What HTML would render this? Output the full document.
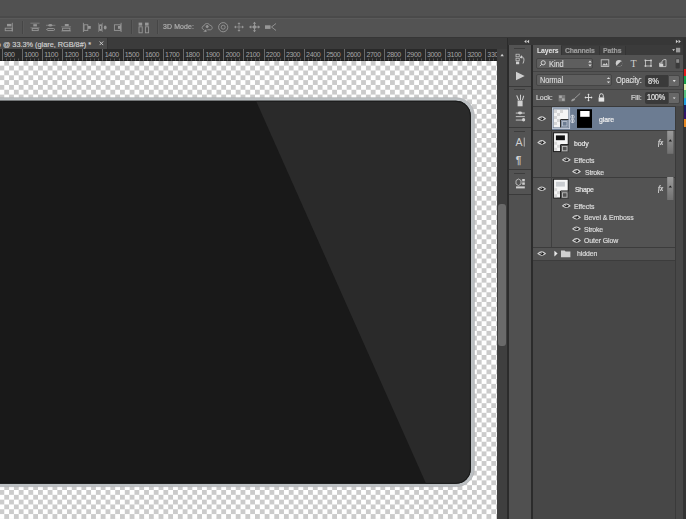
<!DOCTYPE html>
<html><head><meta charset="utf-8"><style>
*{margin:0;padding:0;box-sizing:border-box}
html,body{width:686px;height:519px;overflow:hidden;background:#535353;font-family:"Liberation Sans",sans-serif}
.a{position:absolute}
.t{position:absolute;white-space:nowrap;line-height:1;font-family:"Liberation Sans",sans-serif}
svg{position:absolute;overflow:visible}
</style></head><body>
<div class="a" style="left:0px;top:0px;width:686px;height:17px;background:#515151;"></div>
<div class="a" style="left:0px;top:16px;width:686px;height:2px;background:#4a4a4a;"></div>
<div class="a" style="left:0px;top:18px;width:686px;height:1px;background:#5a5a5a;"></div>
<div class="a" style="left:0px;top:19px;width:686px;height:18px;background:#535353;"></div>
<div class="a" style="left:0px;top:37px;width:686px;height:1px;background:#363636;"></div>
<div class="a" style="left:22px;top:21px;width:1px;height:13px;background:#464646;"></div>
<div class="a" style="left:23px;top:21px;width:1px;height:13px;background:#585858;"></div>
<div class="a" style="left:131px;top:20px;width:1px;height:14px;background:#464646;"></div>
<div class="a" style="left:132px;top:20px;width:1px;height:14px;background:#585858;"></div>
<div class="a" style="left:157px;top:20px;width:1px;height:14px;background:#464646;"></div>
<div class="a" style="left:158px;top:20px;width:1px;height:14px;background:#585858;"></div>
<svg style="left:0;top:0;filter:blur(0.2px)" width="300" height="40" viewBox="0 0 300 40">
<g fill="none" stroke="#979797" stroke-width="0.9">
 <!-- icon1 align right -->
 <rect x="7" y="23.9" width="4.4" height="2.4" fill="#979797" stroke="none"/>
 <rect x="5.2" y="28.2" width="7" height="2.5"/>
 <line x1="12.3" y1="22.8" x2="12.3" y2="31.5"/>
 <!-- icon2 align top -->
 <line x1="30.4" y1="23.2" x2="39.6" y2="23.2" stroke-width="0.6"/>
 <rect x="33.3" y="24.2" width="3.6" height="2.2" fill="#979797" stroke="none"/>
 <line x1="30.4" y1="27.8" x2="39.6" y2="27.8" stroke-width="0.6"/>
 <rect x="32.2" y="28.6" width="6" height="2"/>
 <!-- icon3 align vcenter -->
 <ellipse cx="50.3" cy="25.3" rx="2" ry="1.3" fill="#979797" stroke="none"/>
 <line x1="46" y1="25.3" x2="55.4" y2="25.3" stroke-width="0.6"/>
 <path d="M46.5 29.5 L48 28.5 L53.5 28.5 L55 29.5 L53.5 30.5 L48 30.5 Z"/>
 <!-- icon4 align bottom -->
 <rect x="64.8" y="24" width="3.9" height="2.1" fill="#979797" stroke="none"/>
 <line x1="61.2" y1="26.8" x2="71.1" y2="26.8" stroke-width="0.6"/>
 <rect x="62.6" y="28.2" width="7.3" height="2.4"/>
 <line x1="61.2" y1="31" x2="71.1" y2="31" stroke-width="0.6"/>
 <!-- icon5 align left -->
 <line x1="83.4" y1="22.8" x2="83.4" y2="32"/>
 <rect x="84" y="24.8" width="3.8" height="5.6"/>
 <rect x="88" y="26" width="2.8" height="2.8" fill="#979797" stroke="none"/>
 <!-- icon6 align hcenter -->
 <line x1="102.3" y1="22.8" x2="102.3" y2="32" stroke-width="0.6"/>
 <rect x="99.6" y="24.8" width="1.9" height="5.6"/>
 <ellipse cx="105.2" cy="27.4" rx="1.4" ry="2" fill="#979797" stroke="none"/>
 <line x1="98.5" y1="22.8" x2="98.5" y2="32" stroke-width="0.5"/>
 <!-- icon7 align right -->
 <line x1="121.1" y1="22.8" x2="121.1" y2="32"/>
 <rect x="114.4" y="24.8" width="6" height="5.6"/>
 <rect x="118" y="26" width="2.8" height="2.8" fill="#979797" stroke="none"/>
 <!-- icon8 auto-align -->
 <rect x="138.6" y="22.6" width="3.6" height="3" fill="#979797" stroke="none"/>
 <rect x="145" y="22.6" width="3.6" height="3" fill="#979797" stroke="none"/>
 <rect x="139" y="26.8" width="3.2" height="6"/>
 <rect x="145.4" y="26.8" width="3.2" height="6"/>
</g>
</svg>
<div class="t" style="left:162.6px;top:23.4px;font-size:7.70px;color:#b0b0b0;transform:scaleX(0.9);transform-origin:0 0;-webkit-text-stroke:0.2px #b0b0b0;letter-spacing:0.15px">3D Mode:</div>
<svg style="left:0;top:0;filter:blur(0.2px)" width="300" height="40" viewBox="0 0 300 40">
<g fill="none" stroke="#979797" stroke-width="0.9">
 <path d="M204 29.6 C201.6 29.4 201.4 26 204 25.8 C204.4 23.2 208.6 22.6 209.6 25.2 C212.6 25.2 213.2 29.4 210.4 29.8 L207.4 29.8"/>
 <circle cx="207.2" cy="26.6" r="1.1" fill="#979797"/>
 <path d="M203.2 31.6 L206.2 29.2 L206.6 32 Z" fill="#979797" stroke="none"/>
 <circle cx="223.2" cy="27.2" r="4.6"/>
 <circle cx="223.2" cy="27.2" r="2" />
 <path d="M236 27 L242 27 M239 24 L239 30" stroke-width="0.7"/>
 <path d="M234 27 L236 25.5 L236 28.5 Z M244 27 L242 25.5 L242 28.5 Z M239 22.2 L237.5 24 L240.5 24 Z M239 31.8 L237.5 30 L240.5 30 Z" fill="#979797" stroke="none"/>
 <circle cx="254.5" cy="27" r="1.8" fill="#979797" stroke="none"/>
 <path d="M249.5 27 L259.8 27 M254.5 22 L254.5 32" stroke-width="0.9"/>
 <path d="M249.2 27 L251.2 25.3 L251.2 28.7 Z M259.9 27 L257.9 25.3 L257.9 28.7 Z M254.5 21.8 L252.8 23.8 L256.2 23.8 Z M254.5 32.2 L252.8 30.2 L256.2 30.2 Z" fill="#979797" stroke="none"/>
 <rect x="265" y="25.3" width="5.5" height="3.6" fill="#979797" stroke="none"/>
 <path d="M276 23.5 L271.5 27 L276 30.5"/>
</g>
</svg>
<div class="a" style="left:0px;top:38px;width:507px;height:11px;background:#3b3b3b;"></div>
<div class="a" style="left:0px;top:38px;width:107px;height:11px;background:#4a4a4a;"></div>
<div class="a" style="left:107px;top:38px;width:1px;height:11px;background:#343434;"></div>
<div class="t" style="left:-3.2px;top:40.6px;font-size:7.3px;color:#d2d2d2;-webkit-text-stroke:0.15px #d2d2d2">o @ 33.3% (glare, RGB/8#) *</div>
<svg style="left:0;top:0" width="120" height="60" viewBox="0 0 120 60"><path d="M99.6 41.5 L103.2 45.1 M103.2 41.5 L99.6 45.1" stroke="#c8c8c8" stroke-width="1"/></svg>
<div class="a" style="left:0px;top:49px;width:497px;height:12px;background:#292929;"></div>
<div class="a" style="left:0px;top:60px;width:497px;height:1px;background:#1e1e1e;"></div>
<svg style="left:0;top:0" width="497" height="61" viewBox="0 0 497 61"><g stroke="#686868" stroke-width="1"><line x1="2.50" y1="49" x2="2.50" y2="60.5"/><line x1="6.50" y1="58.5" x2="6.50" y2="60.5" stroke="#5a5a5a"/><line x1="10.50" y1="58.5" x2="10.50" y2="60.5" stroke="#5a5a5a"/><line x1="14.50" y1="58.5" x2="14.50" y2="60.5" stroke="#5a5a5a"/><line x1="18.50" y1="58.5" x2="18.50" y2="60.5" stroke="#5a5a5a"/><line x1="22.50" y1="49" x2="22.50" y2="60.5"/><line x1="26.50" y1="58.5" x2="26.50" y2="60.5" stroke="#5a5a5a"/><line x1="30.50" y1="58.5" x2="30.50" y2="60.5" stroke="#5a5a5a"/><line x1="34.50" y1="58.5" x2="34.50" y2="60.5" stroke="#5a5a5a"/><line x1="38.50" y1="58.5" x2="38.50" y2="60.5" stroke="#5a5a5a"/><line x1="42.50" y1="49" x2="42.50" y2="60.5"/><line x1="46.50" y1="58.5" x2="46.50" y2="60.5" stroke="#5a5a5a"/><line x1="50.50" y1="58.5" x2="50.50" y2="60.5" stroke="#5a5a5a"/><line x1="54.50" y1="58.5" x2="54.50" y2="60.5" stroke="#5a5a5a"/><line x1="58.50" y1="58.5" x2="58.50" y2="60.5" stroke="#5a5a5a"/><line x1="62.50" y1="49" x2="62.50" y2="60.5"/><line x1="66.50" y1="58.5" x2="66.50" y2="60.5" stroke="#5a5a5a"/><line x1="70.50" y1="58.5" x2="70.50" y2="60.5" stroke="#5a5a5a"/><line x1="74.50" y1="58.5" x2="74.50" y2="60.5" stroke="#5a5a5a"/><line x1="78.50" y1="58.5" x2="78.50" y2="60.5" stroke="#5a5a5a"/><line x1="82.50" y1="49" x2="82.50" y2="60.5"/><line x1="86.50" y1="58.5" x2="86.50" y2="60.5" stroke="#5a5a5a"/><line x1="90.50" y1="58.5" x2="90.50" y2="60.5" stroke="#5a5a5a"/><line x1="94.50" y1="58.5" x2="94.50" y2="60.5" stroke="#5a5a5a"/><line x1="98.50" y1="58.5" x2="98.50" y2="60.5" stroke="#5a5a5a"/><line x1="102.50" y1="49" x2="102.50" y2="60.5"/><line x1="106.50" y1="58.5" x2="106.50" y2="60.5" stroke="#5a5a5a"/><line x1="110.50" y1="58.5" x2="110.50" y2="60.5" stroke="#5a5a5a"/><line x1="114.50" y1="58.5" x2="114.50" y2="60.5" stroke="#5a5a5a"/><line x1="119.50" y1="58.5" x2="119.50" y2="60.5" stroke="#5a5a5a"/><line x1="123.50" y1="49" x2="123.50" y2="60.5"/><line x1="127.50" y1="58.5" x2="127.50" y2="60.5" stroke="#5a5a5a"/><line x1="131.50" y1="58.5" x2="131.50" y2="60.5" stroke="#5a5a5a"/><line x1="135.50" y1="58.5" x2="135.50" y2="60.5" stroke="#5a5a5a"/><line x1="139.50" y1="58.5" x2="139.50" y2="60.5" stroke="#5a5a5a"/><line x1="143.50" y1="49" x2="143.50" y2="60.5"/><line x1="147.50" y1="58.5" x2="147.50" y2="60.5" stroke="#5a5a5a"/><line x1="151.50" y1="58.5" x2="151.50" y2="60.5" stroke="#5a5a5a"/><line x1="155.50" y1="58.5" x2="155.50" y2="60.5" stroke="#5a5a5a"/><line x1="159.50" y1="58.5" x2="159.50" y2="60.5" stroke="#5a5a5a"/><line x1="163.50" y1="49" x2="163.50" y2="60.5"/><line x1="167.50" y1="58.5" x2="167.50" y2="60.5" stroke="#5a5a5a"/><line x1="171.50" y1="58.5" x2="171.50" y2="60.5" stroke="#5a5a5a"/><line x1="175.50" y1="58.5" x2="175.50" y2="60.5" stroke="#5a5a5a"/><line x1="179.50" y1="58.5" x2="179.50" y2="60.5" stroke="#5a5a5a"/><line x1="183.50" y1="49" x2="183.50" y2="60.5"/><line x1="187.50" y1="58.5" x2="187.50" y2="60.5" stroke="#5a5a5a"/><line x1="191.50" y1="58.5" x2="191.50" y2="60.5" stroke="#5a5a5a"/><line x1="195.50" y1="58.5" x2="195.50" y2="60.5" stroke="#5a5a5a"/><line x1="199.50" y1="58.5" x2="199.50" y2="60.5" stroke="#5a5a5a"/><line x1="203.50" y1="49" x2="203.50" y2="60.5"/><line x1="207.50" y1="58.5" x2="207.50" y2="60.5" stroke="#5a5a5a"/><line x1="211.50" y1="58.5" x2="211.50" y2="60.5" stroke="#5a5a5a"/><line x1="215.50" y1="58.5" x2="215.50" y2="60.5" stroke="#5a5a5a"/><line x1="219.50" y1="58.5" x2="219.50" y2="60.5" stroke="#5a5a5a"/><line x1="223.50" y1="49" x2="223.50" y2="60.5"/><line x1="227.50" y1="58.5" x2="227.50" y2="60.5" stroke="#5a5a5a"/><line x1="231.50" y1="58.5" x2="231.50" y2="60.5" stroke="#5a5a5a"/><line x1="235.50" y1="58.5" x2="235.50" y2="60.5" stroke="#5a5a5a"/><line x1="239.50" y1="58.5" x2="239.50" y2="60.5" stroke="#5a5a5a"/><line x1="243.50" y1="49" x2="243.50" y2="60.5"/><line x1="247.50" y1="58.5" x2="247.50" y2="60.5" stroke="#5a5a5a"/><line x1="251.50" y1="58.5" x2="251.50" y2="60.5" stroke="#5a5a5a"/><line x1="255.50" y1="58.5" x2="255.50" y2="60.5" stroke="#5a5a5a"/><line x1="259.50" y1="58.5" x2="259.50" y2="60.5" stroke="#5a5a5a"/><line x1="264.50" y1="49" x2="264.50" y2="60.5"/><line x1="268.50" y1="58.5" x2="268.50" y2="60.5" stroke="#5a5a5a"/><line x1="272.50" y1="58.5" x2="272.50" y2="60.5" stroke="#5a5a5a"/><line x1="276.50" y1="58.5" x2="276.50" y2="60.5" stroke="#5a5a5a"/><line x1="280.50" y1="58.5" x2="280.50" y2="60.5" stroke="#5a5a5a"/><line x1="284.50" y1="49" x2="284.50" y2="60.5"/><line x1="288.50" y1="58.5" x2="288.50" y2="60.5" stroke="#5a5a5a"/><line x1="292.50" y1="58.5" x2="292.50" y2="60.5" stroke="#5a5a5a"/><line x1="296.50" y1="58.5" x2="296.50" y2="60.5" stroke="#5a5a5a"/><line x1="300.50" y1="58.5" x2="300.50" y2="60.5" stroke="#5a5a5a"/><line x1="304.50" y1="49" x2="304.50" y2="60.5"/><line x1="308.50" y1="58.5" x2="308.50" y2="60.5" stroke="#5a5a5a"/><line x1="312.50" y1="58.5" x2="312.50" y2="60.5" stroke="#5a5a5a"/><line x1="316.50" y1="58.5" x2="316.50" y2="60.5" stroke="#5a5a5a"/><line x1="320.50" y1="58.5" x2="320.50" y2="60.5" stroke="#5a5a5a"/><line x1="324.50" y1="49" x2="324.50" y2="60.5"/><line x1="328.50" y1="58.5" x2="328.50" y2="60.5" stroke="#5a5a5a"/><line x1="332.50" y1="58.5" x2="332.50" y2="60.5" stroke="#5a5a5a"/><line x1="336.50" y1="58.5" x2="336.50" y2="60.5" stroke="#5a5a5a"/><line x1="340.50" y1="58.5" x2="340.50" y2="60.5" stroke="#5a5a5a"/><line x1="344.50" y1="49" x2="344.50" y2="60.5"/><line x1="348.50" y1="58.5" x2="348.50" y2="60.5" stroke="#5a5a5a"/><line x1="352.50" y1="58.5" x2="352.50" y2="60.5" stroke="#5a5a5a"/><line x1="356.50" y1="58.5" x2="356.50" y2="60.5" stroke="#5a5a5a"/><line x1="360.50" y1="58.5" x2="360.50" y2="60.5" stroke="#5a5a5a"/><line x1="364.50" y1="49" x2="364.50" y2="60.5"/><line x1="368.50" y1="58.5" x2="368.50" y2="60.5" stroke="#5a5a5a"/><line x1="372.50" y1="58.5" x2="372.50" y2="60.5" stroke="#5a5a5a"/><line x1="376.50" y1="58.5" x2="376.50" y2="60.5" stroke="#5a5a5a"/><line x1="380.50" y1="58.5" x2="380.50" y2="60.5" stroke="#5a5a5a"/><line x1="384.50" y1="49" x2="384.50" y2="60.5"/><line x1="388.50" y1="58.5" x2="388.50" y2="60.5" stroke="#5a5a5a"/><line x1="392.50" y1="58.5" x2="392.50" y2="60.5" stroke="#5a5a5a"/><line x1="396.50" y1="58.5" x2="396.50" y2="60.5" stroke="#5a5a5a"/><line x1="400.50" y1="58.5" x2="400.50" y2="60.5" stroke="#5a5a5a"/><line x1="405.50" y1="49" x2="405.50" y2="60.5"/><line x1="409.50" y1="58.5" x2="409.50" y2="60.5" stroke="#5a5a5a"/><line x1="413.50" y1="58.5" x2="413.50" y2="60.5" stroke="#5a5a5a"/><line x1="417.50" y1="58.5" x2="417.50" y2="60.5" stroke="#5a5a5a"/><line x1="421.50" y1="58.5" x2="421.50" y2="60.5" stroke="#5a5a5a"/><line x1="425.50" y1="49" x2="425.50" y2="60.5"/><line x1="429.50" y1="58.5" x2="429.50" y2="60.5" stroke="#5a5a5a"/><line x1="433.50" y1="58.5" x2="433.50" y2="60.5" stroke="#5a5a5a"/><line x1="437.50" y1="58.5" x2="437.50" y2="60.5" stroke="#5a5a5a"/><line x1="441.50" y1="58.5" x2="441.50" y2="60.5" stroke="#5a5a5a"/><line x1="445.50" y1="49" x2="445.50" y2="60.5"/><line x1="449.50" y1="58.5" x2="449.50" y2="60.5" stroke="#5a5a5a"/><line x1="453.50" y1="58.5" x2="453.50" y2="60.5" stroke="#5a5a5a"/><line x1="457.50" y1="58.5" x2="457.50" y2="60.5" stroke="#5a5a5a"/><line x1="461.50" y1="58.5" x2="461.50" y2="60.5" stroke="#5a5a5a"/><line x1="465.50" y1="49" x2="465.50" y2="60.5"/><line x1="469.50" y1="58.5" x2="469.50" y2="60.5" stroke="#5a5a5a"/><line x1="473.50" y1="58.5" x2="473.50" y2="60.5" stroke="#5a5a5a"/><line x1="477.50" y1="58.5" x2="477.50" y2="60.5" stroke="#5a5a5a"/><line x1="481.50" y1="58.5" x2="481.50" y2="60.5" stroke="#5a5a5a"/><line x1="485.50" y1="49" x2="485.50" y2="60.5"/><line x1="489.50" y1="58.5" x2="489.50" y2="60.5" stroke="#5a5a5a"/><line x1="493.50" y1="58.5" x2="493.50" y2="60.5" stroke="#5a5a5a"/></g></svg>
<div class="a" style="left:0;top:49px;width:497px;height:11px;overflow:hidden">
<div class="t" style="left:4.00px;top:2px;font-size:7px;color:#a6a6a6;letter-spacing:-0.35px">900</div>
<div class="t" style="left:24.14px;top:2px;font-size:7px;color:#a6a6a6;letter-spacing:-0.35px">1000</div>
<div class="t" style="left:44.28px;top:2px;font-size:7px;color:#a6a6a6;letter-spacing:-0.35px">1100</div>
<div class="t" style="left:64.42px;top:2px;font-size:7px;color:#a6a6a6;letter-spacing:-0.35px">1200</div>
<div class="t" style="left:84.56px;top:2px;font-size:7px;color:#a6a6a6;letter-spacing:-0.35px">1300</div>
<div class="t" style="left:104.70px;top:2px;font-size:7px;color:#a6a6a6;letter-spacing:-0.35px">1400</div>
<div class="t" style="left:124.84px;top:2px;font-size:7px;color:#a6a6a6;letter-spacing:-0.35px">1500</div>
<div class="t" style="left:144.98px;top:2px;font-size:7px;color:#a6a6a6;letter-spacing:-0.35px">1600</div>
<div class="t" style="left:165.12px;top:2px;font-size:7px;color:#a6a6a6;letter-spacing:-0.35px">1700</div>
<div class="t" style="left:185.26px;top:2px;font-size:7px;color:#a6a6a6;letter-spacing:-0.35px">1800</div>
<div class="t" style="left:205.40px;top:2px;font-size:7px;color:#a6a6a6;letter-spacing:-0.35px">1900</div>
<div class="t" style="left:225.54px;top:2px;font-size:7px;color:#a6a6a6;letter-spacing:-0.35px">2000</div>
<div class="t" style="left:245.68px;top:2px;font-size:7px;color:#a6a6a6;letter-spacing:-0.35px">2100</div>
<div class="t" style="left:265.82px;top:2px;font-size:7px;color:#a6a6a6;letter-spacing:-0.35px">2200</div>
<div class="t" style="left:285.96px;top:2px;font-size:7px;color:#a6a6a6;letter-spacing:-0.35px">2300</div>
<div class="t" style="left:306.10px;top:2px;font-size:7px;color:#a6a6a6;letter-spacing:-0.35px">2400</div>
<div class="t" style="left:326.24px;top:2px;font-size:7px;color:#a6a6a6;letter-spacing:-0.35px">2500</div>
<div class="t" style="left:346.38px;top:2px;font-size:7px;color:#a6a6a6;letter-spacing:-0.35px">2600</div>
<div class="t" style="left:366.52px;top:2px;font-size:7px;color:#a6a6a6;letter-spacing:-0.35px">2700</div>
<div class="t" style="left:386.66px;top:2px;font-size:7px;color:#a6a6a6;letter-spacing:-0.35px">2800</div>
<div class="t" style="left:406.80px;top:2px;font-size:7px;color:#a6a6a6;letter-spacing:-0.35px">2900</div>
<div class="t" style="left:426.94px;top:2px;font-size:7px;color:#a6a6a6;letter-spacing:-0.35px">3000</div>
<div class="t" style="left:447.08px;top:2px;font-size:7px;color:#a6a6a6;letter-spacing:-0.35px">3100</div>
<div class="t" style="left:467.22px;top:2px;font-size:7px;color:#a6a6a6;letter-spacing:-0.35px">3200</div>
<div class="t" style="left:487.36px;top:2px;font-size:7px;color:#a6a6a6;letter-spacing:-0.35px">3300</div>
</div>
<svg style="left:0;top:61px" width="497" height="458" viewBox="0 61 497 458">
<defs>
<pattern id="chk" x="-0.55" y="60.83" width="9.644" height="9.644" patternUnits="userSpaceOnUse">
<rect width="9.644" height="9.644" fill="#fff"/>
<rect x="4.822" y="0" width="4.822" height="4.822" fill="#cbcbcb"/>
<rect x="0" y="4.822" width="4.822" height="4.822" fill="#cbcbcb"/>
</pattern>
<clipPath id="rr"><rect x="-20" y="100.8" width="490.8" height="383" rx="15" ry="15"/></clipPath>
</defs>
<rect x="0" y="61" width="497" height="458" fill="url(#chk)"/>
<rect x="-23" y="97.8" width="497.3" height="388.8" rx="18" ry="18" fill="#bcc0c3" stroke="#b2b4b6" stroke-width="0.8"/>
<rect x="-20" y="100.8" width="490.8" height="383" rx="15" ry="15" fill="#191919"/>
<polygon clip-path="url(#rr)" points="256,100.8 426,483.4 480,483.4 480,100.8" fill="#2a2a2a"/>
<rect x="-19.6" y="101.2" width="490" height="382.2" rx="14.6" ry="14.6" fill="none" stroke="#141515" stroke-width="0.8"/>
</svg>
<div class="a" style="left:497px;top:49px;width:10px;height:470px;background:#3f3f3f;"></div>
<svg style="left:0;top:0" width="520" height="61" viewBox="0 0 520 61"><path d="M500.4 56.2 L502.1 53.8 L503.8 56.2 Z" fill="#d0d0d0"/></svg>
<div class="a" style="left:498px;top:204px;width:7.6px;height:142px;background:#6a6a6a;border-radius:3px"></div>
<div class="a" style="left:507px;top:38px;width:1.5px;height:481px;background:#2b2b2b;"></div>
<div class="a" style="left:508px;top:38px;width:178px;height:7px;background:#373737;"></div>
<svg style="left:0;top:0" width="686" height="50" viewBox="0 0 686 50" fill="#d0d0d0">
<path d="M524.2 41.5 L526.4 39.8 L526.4 43.2 Z M526.9 41.5 L529.1 39.8 L529.1 43.2 Z"/>
<path d="M680.8 41.5 L678.6 39.8 L678.6 43.2 Z M678.1 41.5 L675.9 39.8 L675.9 43.2 Z"/>
</svg>
<div class="a" style="left:508.5px;top:45px;width:22.5px;height:474px;background:#505050;"></div>
<div class="a" style="left:508.5px;top:45px;width:22.5px;height:150px;background:#535353;"></div>
<div class="a" style="left:508.5px;top:86px;width:22.5px;height:1.4px;background:#3a3a3a;"></div>
<div class="a" style="left:508.5px;top:127px;width:22.5px;height:1.4px;background:#3a3a3a;"></div>
<div class="a" style="left:508.5px;top:169px;width:22.5px;height:1.4px;background:#3a3a3a;"></div>
<div class="a" style="left:508.5px;top:194px;width:22.5px;height:1.4px;background:#3a3a3a;"></div>
<div class="a" style="left:514.2px;top:47.6px;width:10.8px;height:0.9px;background:#3d3d3d;"></div>
<div class="a" style="left:514.2px;top:89.4px;width:10.8px;height:0.9px;background:#3d3d3d;"></div>
<div class="a" style="left:514.2px;top:131px;width:10.8px;height:0.9px;background:#3d3d3d;"></div>
<div class="a" style="left:514.2px;top:172.8px;width:10.8px;height:0.9px;background:#3d3d3d;"></div>
<svg style="left:0;top:0" width="686" height="200" viewBox="0 0 686 200">
<g fill="#cfcfcf">
 <rect x="516" y="54.2" width="3.2" height="2.6" fill="none" stroke="#cfcfcf" stroke-width="0.7"/>
 <rect x="516" y="58.2" width="3.2" height="2.6" fill="none" stroke="#cfcfcf" stroke-width="0.7"/>
 <rect x="516" y="61.6" width="3.2" height="2.6"/>
 <path d="M520.5 57 C523.5 56 525 59 523 63.5" fill="none" stroke="#cfcfcf" stroke-width="0.9"/>
 <path d="M519.8 57.8 L521.8 55 L522.4 58.4 Z"/>
 <path d="M516 71.8 L524.7 76 L516 80.2 Z"/>
 <rect x="517.6" y="100.5" width="5" height="5.8"/>
 <path d="M518 100 L516.2 95.5 L517.2 95.2 L519.2 100 Z M520 100 L520 94.8 L521 94.8 L521 100 Z M522 100 L523.2 95.5 L524.2 96 L523 100 Z"/>
 <rect x="515.8" y="112.6" width="9" height="0.9"/>
 <rect x="515.8" y="116.2" width="9" height="0.9"/>
 <rect x="515.8" y="119.6" width="9" height="0.9"/>
 <ellipse cx="520" cy="113" rx="2" ry="1.4"/>
 <ellipse cx="523.6" cy="119.8" rx="1.6" ry="1.8"/>
</g>
<text x="515.6" y="146.2" font-family="Liberation Sans" font-size="10.5" fill="#cfcfcf">A</text>
<rect x="523.8" y="137.6" width="0.8" height="9" fill="#cfcfcf"/>
<text x="515.8" y="163.6" font-family="Liberation Sans" font-size="10" font-weight="bold" fill="#cfcfcf">¶</text>
<g fill="#cfcfcf">
 <path d="M516 180.5 L518.5 179 L521 180.5 L521 184 L518.5 185.5 L516 184 Z" fill="none" stroke="#cfcfcf" stroke-width="0.8"/>
 <rect x="522.2" y="179" width="2.6" height="2.4"/>
 <rect x="522.2" y="182.4" width="2.6" height="2.4"/>
 <rect x="516" y="186.4" width="8.8" height="2"/>
</g>
</svg>
<div class="a" style="left:531px;top:45px;width:2px;height:474px;background:#2b2b2b;"></div>
<div class="a" style="left:533px;top:45px;width:150px;height:474px;background:#474747;"></div>
<div class="a" style="left:533px;top:45px;width:150px;height:10px;background:#3b3b3b;"></div>
<div class="a" style="left:533px;top:45px;width:28.2px;height:10px;background:#535353;"></div>
<div class="a" style="left:561.2px;top:45.5px;width:37.5px;height:9.5px;background:#3e3e3e;"></div>
<div class="a" style="left:598.7px;top:45.5px;width:26.3px;height:9.5px;background:#3e3e3e;"></div>
<div class="a" style="left:561.2px;top:45.5px;width:1px;height:9.5px;background:#343434;"></div>
<div class="a" style="left:598.7px;top:45.5px;width:1px;height:9.5px;background:#343434;"></div>
<div class="a" style="left:625px;top:45.5px;width:1px;height:9.5px;background:#343434;"></div>
<div class="t" style="left:536.6px;top:47.4px;font-size:7.70px;color:#e6e6e6;transform:scaleX(0.9);transform-origin:0 0;-webkit-text-stroke:0.2px #e6e6e6;font-weight:bold;letter-spacing:-0.15px;-webkit-text-stroke:0px">Layers</div>
<div class="t" style="left:565.2px;top:47.4px;font-size:7.70px;color:#9c9c9c;transform:scaleX(0.9);transform-origin:0 0;-webkit-text-stroke:0.2px #9c9c9c;font-weight:bold;letter-spacing:-0.2px">Channels</div>
<div class="t" style="left:603px;top:47.4px;font-size:7.70px;color:#9c9c9c;transform:scaleX(0.9);transform-origin:0 0;-webkit-text-stroke:0.2px #9c9c9c;font-weight:bold;letter-spacing:-0.1px">Paths</div>
<svg style="left:0;top:0" width="686" height="60" viewBox="0 0 686 60">
<path d="M672.2 49.2 L675 49.2 L673.6 51 Z" fill="#d8d8d8"/>
<rect x="676" y="47.8" width="4.2" height="4.6" fill="#9a9a9a"/>
</svg>
<div class="a" style="left:533px;top:55px;width:150px;height:52px;background:#535353;"></div>
<div class="a" style="left:533px;top:70.5px;width:150px;height:0.8px;background:#434343;"></div>
<div class="a" style="left:536px;top:58.2px;width:57px;height:10.6px;background:#5e5e5e;border:1px solid #454545;border-radius:2px"></div>
<svg style="left:0;top:0" width="686" height="110" viewBox="0 0 686 110">
<g fill="none" stroke="#dcdcdc" stroke-width="0.9">
 <circle cx="543.2" cy="62.8" r="2.1"/>
 <line x1="541.7" y1="64.3" x2="539.8" y2="66.2"/>
</g>
<g fill="#dcdcdc">
 <path d="M588.3 62.4 L590 60.6 L591.7 62.4 Z M588.3 64.6 L590 66.4 L591.7 64.6 Z"/>
</g>
</svg>
<div class="t" style="left:548.5px;top:59.8px;font-size:8.36px;color:#e0e0e0;transform:scaleX(0.9);transform-origin:0 0;-webkit-text-stroke:0.2px #e0e0e0;letter-spacing:-0.1px;-webkit-text-stroke:0.05px #e0e0e0">Kind</div>
<svg style="left:0;top:0" width="686" height="110" viewBox="0 0 686 110">
<g stroke="#cfcfcf" fill="none" stroke-width="0.8">
 <rect x="601.2" y="59.8" width="7.6" height="6.6"/>
 <path d="M602 65.6 L604 63.2 L605.4 64.4 L606.6 62.8 L608 65.6 Z" fill="#cfcfcf" stroke="none"/>
 <circle cx="619" cy="63.2" r="3.2" fill="#cfcfcf" stroke="none"/>
 <path d="M621.3 60.9 L616.7 65.5 A3.2 3.2 0 0 0 621.3 60.9 Z" fill="#535353" stroke="none"/>
 <rect x="645.4" y="60.4" width="5.6" height="5.6"/>
 <rect x="644.6" y="59.6" width="1.6" height="1.6" fill="#cfcfcf" stroke="none"/>
 <rect x="650.2" y="59.6" width="1.6" height="1.6" fill="#cfcfcf" stroke="none"/>
 <rect x="644.6" y="65.2" width="1.6" height="1.6" fill="#cfcfcf" stroke="none"/>
 <rect x="650.2" y="65.2" width="1.6" height="1.6" fill="#cfcfcf" stroke="none"/>
 <path d="M659.6 63 L662 63 L662 61 L664 59.6 L666 59.6 L666 66.6 L659.6 66.6 Z"/>
 <rect x="659.6" y="63.6" width="3.6" height="3" fill="#cfcfcf" stroke="none"/>
</g>
<text x="630.6" y="67" font-family="Liberation Serif" font-size="10" fill="#cfcfcf">T</text>
<rect x="675.6" y="58.6" width="4.2" height="9.8" fill="#3a3a3a" rx="1"/>
<rect x="676.2" y="59.2" width="3" height="3.6" fill="#8a8a8a"/>
</svg>
<div class="a" style="left:536px;top:74.4px;width:76px;height:12px;background:#5e5e5e;border:1px solid #454545;border-radius:2px"></div>
<div class="t" style="left:539.6px;top:76.6px;font-size:8.14px;color:#e0e0e0;transform:scaleX(0.9);transform-origin:0 0;-webkit-text-stroke:0.2px #e0e0e0;letter-spacing:-0.1px;-webkit-text-stroke:0.05px #e0e0e0">Normal</div>
<div class="t" style="left:616.2px;top:76.6px;font-size:8.14px;color:#d8d8d8;transform:scaleX(0.9);transform-origin:0 0;-webkit-text-stroke:0.2px #d8d8d8;letter-spacing:-0.15px">Opacity:</div>
<div class="a" style="left:645px;top:74.6px;width:23.2px;height:12.2px;background:#3a3a3a;border-radius:2px 0 0 2px"></div>
<div class="a" style="left:668.2px;top:74.6px;width:12.2px;height:12.2px;background:#676767;border:1px solid #474747;border-radius:0 2px 2px 0"></div>
<div class="t" style="left:648.2px;top:76.8px;font-size:8.36px;color:#e2e2e2;transform:scaleX(0.9);transform-origin:0 0;-webkit-text-stroke:0.2px #e2e2e2;">8%</div>
<svg style="left:0;top:0" width="686" height="110" viewBox="0 0 686 110" fill="#dcdcdc"><path d="M606.8 79 L608.5 77.2 L610.2 79 Z M606.8 81.4 L608.5 83.2 L610.2 81.4 Z"/><path d="M672.8 80.2 L675.6 80.2 L674.2 81.8 Z" fill="#e6e6e6"/></svg>
<svg style="left:0;top:0" width="686" height="110" viewBox="0 0 686 110" fill="#e6e6e6">
<path d="M672.8 80.2 L675.6 80.2 L674.2 81.8 Z"/>
<path d="M672.8 97.4 L675.6 97.4 L674.2 99 Z"/>
</svg>
<div class="a" style="left:533px;top:88.6px;width:150px;height:0.8px;background:#434343;"></div>
<div class="t" style="left:535.8px;top:93.8px;font-size:7.92px;color:#d6d6d6;transform:scaleX(0.9);transform-origin:0 0;-webkit-text-stroke:0.2px #d6d6d6;letter-spacing:-0.1px">Lock:</div>
<div class="t" style="left:630.8px;top:94.2px;font-size:7.92px;color:#d6d6d6;transform:scaleX(0.9);transform-origin:0 0;-webkit-text-stroke:0.2px #d6d6d6;letter-spacing:-0.1px">Fill:</div>
<div class="a" style="left:645px;top:91.8px;width:23.2px;height:12.2px;background:#3a3a3a;border-radius:2px 0 0 2px"></div>
<div class="a" style="left:668.2px;top:91.8px;width:12.2px;height:12.2px;background:#676767;border:1px solid #474747;border-radius:0 2px 2px 0"></div>
<div class="t" style="left:646.8px;top:94px;font-size:8.14px;color:#e2e2e2;transform:scaleX(0.9);transform-origin:0 0;-webkit-text-stroke:0.2px #e2e2e2;letter-spacing:-0.2px">100%</div>
<svg style="left:0;top:0" width="686" height="110" viewBox="0 0 686 110" fill="#e6e6e6"><path d="M672.8 97.4 L675.6 97.4 L674.2 99 Z"/></svg>
<svg style="left:0;top:0" width="686" height="110" viewBox="0 0 686 110">
<rect x="558.6" y="95" width="6.6" height="6.4" fill="#7a7a7a"/>
<g fill="#a8a8a8"><rect x="559.2" y="95.6" width="2.6" height="2.4"/><rect x="562" y="98.4" width="2.6" height="2.4"/></g>
<path d="M574.5 98.6 L580.2 93.4" stroke="#9c9c9c" stroke-width="1"/>
<path d="M571 101.2 C571.5 99.5 572.5 98.2 574.6 98.4 L575.2 99.2 C574.2 100.8 572.8 101.4 571 101.2 Z" fill="#9c9c9c"/>
<g stroke="#e0e0e0" stroke-width="0.9" fill="#e0e0e0">
 <path d="M585 97.5 L592 97.5 M588.5 94 L588.5 101" fill="none"/>
 <path d="M584.4 97.5 L586 96.3 L586 98.7 Z M592.6 97.5 L591 96.3 L591 98.7 Z M588.5 93.4 L587.3 95 L589.7 95 Z M588.5 101.6 L587.3 100 L589.7 100 Z" stroke="none"/>
</g>
<g fill="#e6e6e6">
 <path d="M599.5 97.5 L599.5 95.6 A1.9 1.9 0 0 1 603.3 95.6 L603.3 97.5" fill="none" stroke="#e6e6e6" stroke-width="0.9"/>
 <rect x="598.6" y="97.4" width="5.6" height="4.2"/>
</g>
</svg>
<div class="a" style="left:533px;top:106px;width:150px;height:0.8px;background:#3a3a3a;"></div>
<div class="a" style="left:533px;top:106.8px;width:141.5px;height:140.2px;background:#535353;"></div>
<div class="a" style="left:533px;top:247px;width:141.5px;height:13.2px;background:#535353;"></div>
<div class="a" style="left:551.5px;top:106.8px;width:123px;height:23.2px;background:#6c7c92;"></div>
<div class="a" style="left:533px;top:129.9px;width:141.5px;height:0.9px;background:#3c3c3c;"></div>
<div class="a" style="left:533px;top:176.6px;width:141.5px;height:0.9px;background:#3c3c3c;"></div>
<div class="a" style="left:533px;top:246.6px;width:141.5px;height:0.9px;background:#3c3c3c;"></div>
<div class="a" style="left:533px;top:260.2px;width:141.5px;height:0.9px;background:#3c3c3c;"></div>
<div class="a" style="left:551.2px;top:106.8px;width:0.9px;height:140px;background:#3f3f3f;"></div>
<div class="a" style="left:674.5px;top:106px;width:1px;height:413px;background:#3a3a3a;"></div>
<div class="a" style="left:675.5px;top:106px;width:7.5px;height:413px;background:#474747;"></div>
<div class="a" style="left:683px;top:38px;width:1.4px;height:481px;background:#303030;"></div>
<svg style="left:0;top:0" width="686" height="519" viewBox="0 0 686 519"><g transform="translate(541.7,118.6) scale(1.0)"><path d="M-3.7 0.1 Q0 -3.6 3.7 0.1 Q0 3.3 -3.7 0.1 Z" fill="#3c3c3c" stroke="#d4d4d4" stroke-width="1.05"/><circle cx="0.3" cy="0.2" r="1.3" fill="#1e1e1e"/><circle cx="-0.5" cy="-0.5" r="0.6" fill="#d4d4d4"/></g><g transform="translate(541.7,142.4) scale(1.0)"><path d="M-3.7 0.1 Q0 -3.6 3.7 0.1 Q0 3.3 -3.7 0.1 Z" fill="#3c3c3c" stroke="#d4d4d4" stroke-width="1.05"/><circle cx="0.3" cy="0.2" r="1.3" fill="#1e1e1e"/><circle cx="-0.5" cy="-0.5" r="0.6" fill="#d4d4d4"/></g><g transform="translate(566.3,159.7) scale(1.0)"><path d="M-3.7 0.1 Q0 -3.6 3.7 0.1 Q0 3.3 -3.7 0.1 Z" fill="#3c3c3c" stroke="#d4d4d4" stroke-width="1.05"/><circle cx="0.3" cy="0.2" r="1.3" fill="#1e1e1e"/><circle cx="-0.5" cy="-0.5" r="0.6" fill="#d4d4d4"/></g><g transform="translate(576.5,171.4) scale(1.0)"><path d="M-3.7 0.1 Q0 -3.6 3.7 0.1 Q0 3.3 -3.7 0.1 Z" fill="#3c3c3c" stroke="#d4d4d4" stroke-width="1.05"/><circle cx="0.3" cy="0.2" r="1.3" fill="#1e1e1e"/><circle cx="-0.5" cy="-0.5" r="0.6" fill="#d4d4d4"/></g><g transform="translate(541.7,188.8) scale(1.0)"><path d="M-3.7 0.1 Q0 -3.6 3.7 0.1 Q0 3.3 -3.7 0.1 Z" fill="#3c3c3c" stroke="#d4d4d4" stroke-width="1.05"/><circle cx="0.3" cy="0.2" r="1.3" fill="#1e1e1e"/><circle cx="-0.5" cy="-0.5" r="0.6" fill="#d4d4d4"/></g><g transform="translate(566.3,205.8) scale(1.0)"><path d="M-3.7 0.1 Q0 -3.6 3.7 0.1 Q0 3.3 -3.7 0.1 Z" fill="#3c3c3c" stroke="#d4d4d4" stroke-width="1.05"/><circle cx="0.3" cy="0.2" r="1.3" fill="#1e1e1e"/><circle cx="-0.5" cy="-0.5" r="0.6" fill="#d4d4d4"/></g><g transform="translate(576.5,217.2) scale(1.0)"><path d="M-3.7 0.1 Q0 -3.6 3.7 0.1 Q0 3.3 -3.7 0.1 Z" fill="#3c3c3c" stroke="#d4d4d4" stroke-width="1.05"/><circle cx="0.3" cy="0.2" r="1.3" fill="#1e1e1e"/><circle cx="-0.5" cy="-0.5" r="0.6" fill="#d4d4d4"/></g><g transform="translate(576.5,228.8) scale(1.0)"><path d="M-3.7 0.1 Q0 -3.6 3.7 0.1 Q0 3.3 -3.7 0.1 Z" fill="#3c3c3c" stroke="#d4d4d4" stroke-width="1.05"/><circle cx="0.3" cy="0.2" r="1.3" fill="#1e1e1e"/><circle cx="-0.5" cy="-0.5" r="0.6" fill="#d4d4d4"/></g><g transform="translate(576.5,240.4) scale(1.0)"><path d="M-3.7 0.1 Q0 -3.6 3.7 0.1 Q0 3.3 -3.7 0.1 Z" fill="#3c3c3c" stroke="#d4d4d4" stroke-width="1.05"/><circle cx="0.3" cy="0.2" r="1.3" fill="#1e1e1e"/><circle cx="-0.5" cy="-0.5" r="0.6" fill="#d4d4d4"/></g><g transform="translate(541.7,253.6) scale(1.0)"><path d="M-3.7 0.1 Q0 -3.6 3.7 0.1 Q0 3.3 -3.7 0.1 Z" fill="#3c3c3c" stroke="#d4d4d4" stroke-width="1.05"/><circle cx="0.3" cy="0.2" r="1.3" fill="#1e1e1e"/><circle cx="-0.5" cy="-0.5" r="0.6" fill="#d4d4d4"/></g>
<rect x="552.4" y="108" width="17.2" height="20.6" fill="none" stroke="#c9d2de" stroke-width="0.9"/>
<rect x="553.6" y="109.4" width="14.8" height="18" fill="#f4f4f4"/>
<g fill="#d6d6d6"><rect x="554" y="110" width="3" height="3"/><rect x="557" y="113" width="3" height="3"/><rect x="554" y="116" width="3" height="3"/><rect x="557" y="119" width="3" height="3"/><rect x="554" y="122" width="3" height="3"/><rect x="560" y="110" width="3" height="3"/></g>
<path d="M568.4 119.6 L560.6 119.6 L560.6 127.4" fill="none" stroke="#1a1a1a" stroke-width="1"/>
<rect x="561.2" y="120.2" width="7.2" height="7.2" fill="#6c7c92"/>
<rect x="562.6" y="121.6" width="4.4" height="4.4" fill="none" stroke="#c0c8d4" stroke-width="0.8"/>
<path d="M572.5 115 L572.5 118 M572.5 119.5 L572.5 122.8" stroke="#d8dde4" stroke-width="0.9"/>
<rect x="570.9" y="115.2" width="3.2" height="3.2" rx="1.2" fill="none" stroke="#d8dde4" stroke-width="0.8"/>
<rect x="570.9" y="119.4" width="3.2" height="3.2" rx="1.2" fill="none" stroke="#d8dde4" stroke-width="0.8"/>
<rect x="577" y="109.2" width="15" height="18.7" fill="#000"/>
<rect x="580.2" y="111" width="9.4" height="5.8" fill="#fff"/>

<rect x="553.6" y="132.8" width="14.6" height="18.8" fill="#f6f6f6" stroke="#111" stroke-width="0.9"/>
<g fill="#d8d8d8"><rect x="554.1" y="141.8" width="3" height="3"/><rect x="557.1" y="144.8" width="3" height="3"/><rect x="554.1" y="147.8" width="3" height="3"/></g>
<rect x="555.9" y="135.4" width="9" height="4.8" fill="#111"/>
<path d="M568.2 144.60000000000002 L560.6 144.60000000000002 L560.6 151.60000000000002" fill="none" stroke="#111" stroke-width="1"/>
<rect x="561.0" y="145.0" width="7.6" height="7" fill="#535353"/>
<rect x="562.4" y="146.4" width="4.6" height="4.4" fill="none" stroke="#c8c8c8" stroke-width="0.8"/>

<rect x="553.6" y="179.2" width="14.6" height="18.8" fill="#f6f6f6" stroke="#111" stroke-width="0.9"/>
<g fill="#d8d8d8"><rect x="554.1" y="188.2" width="3" height="3"/><rect x="557.1" y="191.2" width="3" height="3"/><rect x="554.1" y="194.2" width="3" height="3"/></g>
<rect x="555.9" y="181.79999999999998" width="9" height="4.8" fill="#c9ccd0"/>
<path d="M568.2 191.0 L560.6 191.0 L560.6 198.0" fill="none" stroke="#111" stroke-width="1"/>
<rect x="561.0" y="191.39999999999998" width="7.6" height="7" fill="#535353"/>
<rect x="562.4" y="192.79999999999998" width="4.6" height="4.4" fill="none" stroke="#c8c8c8" stroke-width="0.8"/>
<defs><linearGradient id="g130" x1="0" x2="0" y1="0" y2="1"><stop offset="0" stop-color="#9a9a9a"/><stop offset="1" stop-color="#707070"/></linearGradient></defs>
<rect x="667.2" y="130.8" width="6.2" height="23" fill="url(#g130)"/>
<path d="M668.6 141.4 L670.3 139.20000000000002 L672 141.4 Z" fill="#1e1e1e"/><defs><linearGradient id="g177" x1="0" x2="0" y1="0" y2="1"><stop offset="0" stop-color="#9a9a9a"/><stop offset="1" stop-color="#707070"/></linearGradient></defs>
<rect x="667.2" y="177" width="6.2" height="23" fill="url(#g177)"/>
<path d="M668.6 187.6 L670.3 185.4 L672 187.6 Z" fill="#1e1e1e"/>
<path d="M554.4 250.8 L557.6 253.6 L554.4 256.4 Z" fill="#e8e8e8"/>
<path d="M561 250.6 L564.6 250.6 L565.6 251.6 L570.4 251.6 L570.4 257.2 L561 257.2 Z" fill="#cfcfcf"/>
</svg>
<div class="t" style="left:658.2px;top:138.8px;font-size:7.92px;color:#e0e0e0;transform:scaleX(0.9);transform-origin:0 0;-webkit-text-stroke:0.2px #e0e0e0;font-style:italic;font-family:'Liberation Serif',serif">fx</div>
<div class="t" style="left:658.2px;top:185.2px;font-size:7.92px;color:#e0e0e0;transform:scaleX(0.9);transform-origin:0 0;-webkit-text-stroke:0.2px #e0e0e0;font-style:italic;font-family:'Liberation Serif',serif">fx</div>
<div class="t" style="left:598.9px;top:115.8px;font-size:7.70px;color:#f0f0f0;transform:scaleX(0.9);transform-origin:0 0;-webkit-text-stroke:0.2px #f0f0f0;letter-spacing:-0.1px">glare</div>
<div class="t" style="left:574.3px;top:140.0px;font-size:7.70px;color:#e8e8e8;transform:scaleX(0.9);transform-origin:0 0;-webkit-text-stroke:0.2px #e8e8e8;letter-spacing:-0.1px">body</div>
<div class="t" style="left:574px;top:156.8px;font-size:7.70px;color:#dcdcdc;transform:scaleX(0.9);transform-origin:0 0;-webkit-text-stroke:0.2px #dcdcdc;letter-spacing:-0.1px">Effects</div>
<div class="t" style="left:584.7px;top:168.5px;font-size:7.70px;color:#dcdcdc;transform:scaleX(0.9);transform-origin:0 0;-webkit-text-stroke:0.2px #dcdcdc;letter-spacing:-0.2px">Stroke</div>
<div class="t" style="left:574.7px;top:185.9px;font-size:7.70px;color:#e8e8e8;transform:scaleX(0.9);transform-origin:0 0;-webkit-text-stroke:0.2px #e8e8e8;letter-spacing:-0.3px">Shape</div>
<div class="t" style="left:574px;top:202.9px;font-size:7.70px;color:#dcdcdc;transform:scaleX(0.9);transform-origin:0 0;-webkit-text-stroke:0.2px #dcdcdc;letter-spacing:-0.1px">Effects</div>
<div class="t" style="left:584.3px;top:214.2px;font-size:7.70px;color:#dcdcdc;transform:scaleX(0.9);transform-origin:0 0;-webkit-text-stroke:0.2px #dcdcdc;letter-spacing:-0.1px">Bevel &amp; Emboss</div>
<div class="t" style="left:584.3px;top:225.8px;font-size:7.70px;color:#dcdcdc;transform:scaleX(0.9);transform-origin:0 0;-webkit-text-stroke:0.2px #dcdcdc;letter-spacing:-0.2px">Stroke</div>
<div class="t" style="left:584.3px;top:237.4px;font-size:7.70px;color:#dcdcdc;transform:scaleX(0.9);transform-origin:0 0;-webkit-text-stroke:0.2px #dcdcdc;letter-spacing:-0.1px">Outer Glow</div>
<div class="t" style="left:577.4px;top:250.4px;font-size:7.70px;color:#dcdcdc;transform:scaleX(0.9);transform-origin:0 0;-webkit-text-stroke:0.2px #dcdcdc;letter-spacing:-0.1px">hidden</div>
<div class="a" style="left:683px;top:38px;width:3px;height:481px;background:#333333;"></div>
<div class="a" style="left:684.3px;top:68.8px;width:1.7px;height:7.1000000000000085px;background:#e01b1b;"></div>
<div class="a" style="left:684.3px;top:75.9px;width:1.7px;height:7.699999999999989px;background:#1a9e47;"></div>
<div class="a" style="left:684.3px;top:83.6px;width:1.7px;height:6.800000000000011px;background:#dff0b0;"></div>
<div class="a" style="left:684.3px;top:90.4px;width:1.7px;height:7.3999999999999915px;background:#56bf7d;"></div>
<div class="a" style="left:684.3px;top:97.8px;width:1.7px;height:7.400000000000006px;background:#1ea0e0;"></div>
<div class="a" style="left:684.3px;top:105.2px;width:1.7px;height:6.799999999999997px;background:#1c2266;"></div>
<div class="a" style="left:684.3px;top:112px;width:1.7px;height:7.400000000000006px;background:#33136b;"></div>
<div class="a" style="left:684.3px;top:119.4px;width:1.7px;height:8.099999999999994px;background:#e6861f;"></div>
</body></html>
